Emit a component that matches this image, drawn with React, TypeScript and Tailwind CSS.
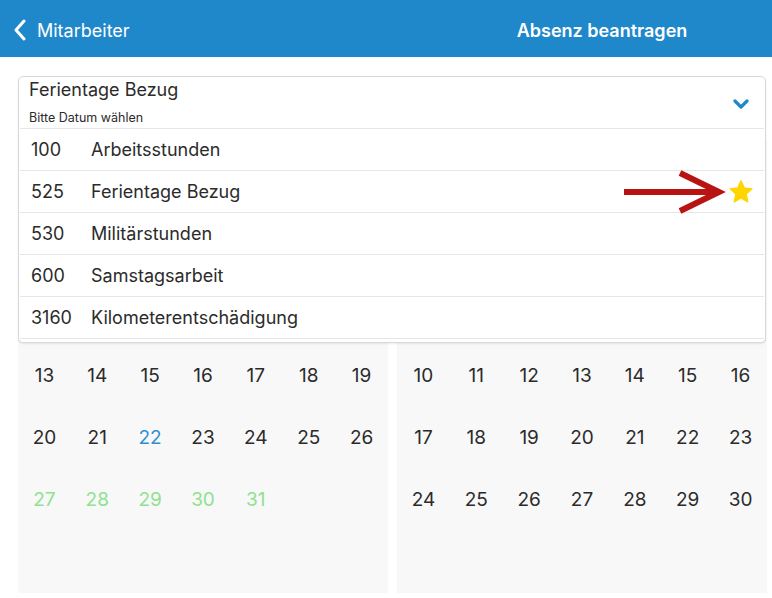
import React from "react";

const font = { fontFamily: "Inter, 'Liberation Sans', Arial, sans-serif" };

function mkRows(startCol: number, days: number, firstVisible: number): (number | null)[][] {
  const cells: (number | null)[] = [];
  for (let i = 0; i < startCol; i++) cells.push(null);
  for (let d = 1; d <= days; d++) cells.push(d >= firstVisible ? d : null);
  while (cells.length < 42) cells.push(null);
  const rows: (number | null)[][] = [];
  for (let i = 0; i < 6; i++) rows.push(cells.slice(i * 7, i * 7 + 7));
  return rows;
}

function Month({ rows, color }: { rows: (number | null)[][]; color: (n: number) => string }) {
  return (
    <div className="bg-[#f8f8f8] w-[370px] shrink-0">
      <div className="h-[81px]" />
      <div className="grid grid-cols-7">
        {rows.flat().map((n, i) => (
          <div key={i} className={`h-[62px] flex items-center justify-center text-[19px] ${n ? color(n) : ""}`}>
            {n ?? ""}
          </div>
        ))}
      </div>
    </div>
  );
}

const options = [
  ["100", "Arbeitsstunden"],
  ["525", "Ferientage Bezug"],
  ["530", "Militärstunden"],
  ["600", "Samstagsarbeit"],
  ["3160", "Kilometerentschädigung"],
];

export default function App() {
  const leftRows = mkRows(2, 31, 13);
  const rightRows = mkRows(5, 30, 10);
  return (
    <div className="w-[772px] h-[598px] bg-white relative overflow-hidden text-[#2b2b2b]" style={font}>
      <div className="h-[57px] bg-[#1f88cb] flex items-center text-white pt-[3px]">
        <div className="flex items-center pl-[13px] w-[432px]">
          <svg width="14" height="22" viewBox="0 0 14 22" className="mr-[10px]">
            <path d="M11 2 L3 11 L11 20" fill="none" stroke="white" strokeWidth="3" strokeLinecap="round" strokeLinejoin="round" />
          </svg>
          <span className="text-[18px]">Mitarbeiter</span>
        </div>
        <div className="flex-1 text-center text-[18px] font-semibold">Absenz beantragen</div>
      </div>

      <div className="pl-[18px] pt-[19px]">
        <div className="h-[52px]" />
        <div className="flex gap-[9px] mt-[12px]">
          <Month rows={leftRows} color={(n) => (n === 22 ? "text-[#2e8fd1]" : n >= 27 ? "text-[#8ee290]" : "text-[#2b2b2b]")} />
          <Month rows={rightRows} color={() => "text-[#2b2b2b]"} />
        </div>
      </div>

      <div className="absolute left-[18px] top-[76px] w-[748px] h-[267px] bg-white border border-[#d8d8d8] rounded-[5px] shadow-[0_1px_2px_rgba(0,0,0,0.08)]">
        <div className="relative h-[52px] pl-[9px] border-b border-[#e6e6e6] mx-[1px]">
          <div className="text-[18px] leading-[22px] pt-[2px] text-[#2b2b2b]">Ferientage Bezug</div>
          <div className="text-[12.5px] leading-[16px] mt-[9px] text-[#2b2b2b]">Bitte Datum wählen</div>
          <svg width="16" height="12" viewBox="0 0 16 12" className="absolute right-[15px] top-[21px]">
            <path d="M2 3 L8 9 L14 3" fill="none" stroke="#1f88cb" strokeWidth="3.2" strokeLinecap="round" strokeLinejoin="round" />
          </svg>
        </div>
        {options.map(([code, label], i) => (
          <div key={code} className="relative h-[42px] flex items-center mx-[1px] border-b border-[#e6e6e6]">
            <span className="w-[71px] shrink-0 pl-[11px] text-[18px]">{code}</span>
            <span className="text-[18px]">{label}</span>
            {i === 1 && (
              <>
                <svg width="110" height="46" viewBox="0 0 110 46" className="absolute left-[601px] top-[-2px]">
                  <path d="M3 23 L98 23" stroke="#b81414" strokeWidth="6" />
                  <path d="M59 4 L98 23 L59 42" fill="none" stroke="#b81414" strokeWidth="6" strokeLinejoin="miter" />
                </svg>
                <svg width="28" height="28" viewBox="0 0 24 24" className="absolute left-[707px] top-[7px]">
                  <path d="M12 2.5 L14.8 8.6 L21.4 9.3 L16.4 13.8 L17.8 20.4 L12 17 L6.2 20.4 L7.6 13.8 L2.6 9.3 L9.2 8.6 Z" fill="#ffd500" stroke="#ffd500" strokeWidth="1.2" strokeLinejoin="round" />
                </svg>
              </>
            )}
          </div>
        ))}
      </div>
    </div>
  );
}
